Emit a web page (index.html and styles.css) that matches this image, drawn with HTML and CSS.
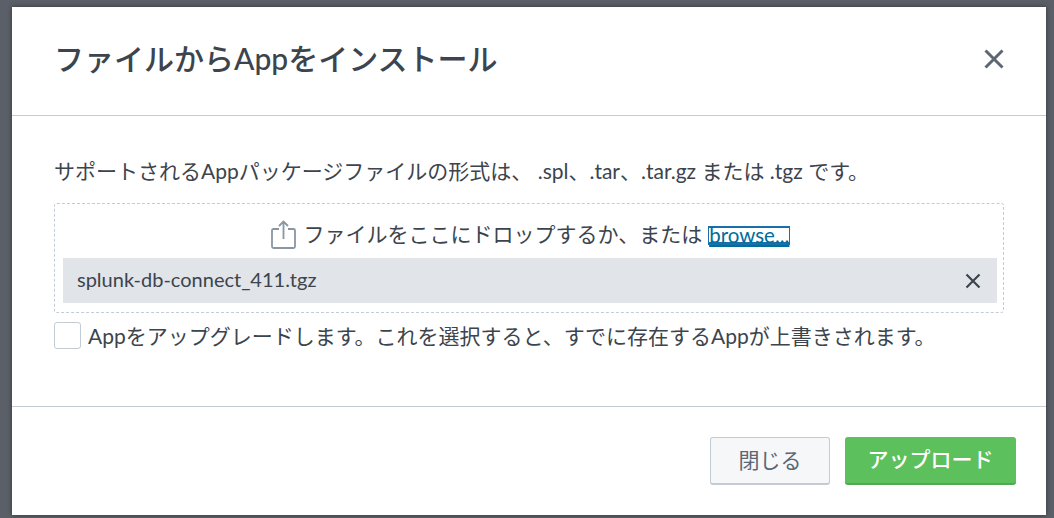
FILE: index.html
```html
<!DOCTYPE html>
<html lang="ja">
<head>
<meta charset="utf-8">
<title>ファイルからAppをインストール</title>
<link rel="stylesheet" href="styles.css">
</head>
<body>
<div class="modal">
  <header class="modal-head">
    <h1 class="title">ファイルからAppをインストール</h1>
    <svg class="close" viewBox="0 0 20 20" width="20" height="20"><path d="M1.5 1.5L18.5 18.5M18.5 1.5L1.5 18.5"/></svg>
  </header>
  <main class="modal-body">
    <p class="formats">サポートされるAppパッケージファイルの形式は、 .spl、.tar、.tar.gz または .tgz です。</p>
    <div class="dropzone">
      <div class="drop-line">
        <svg class="upload" viewBox="0 0 25 29" width="25" height="29"><path d="M8 9H2.5Q1 9 1 10.5V26.5Q1 28 2.5 28H22.5Q24 28 24 26.5V10.5Q24 9 22.5 9H17M12.5 19V1.5M8 6L12.5 1.5L17 6"/></svg>
        <span class="drop-text">ファイルをここにドロップするか、または</span>
        <a class="browse" href="#">browse...</a>
      </div>
      <div class="file-row">
        <span class="file-name">splunk-db-connect_411.tgz</span>
        <svg class="remove" viewBox="0 0 16 16" width="16" height="16"><path d="M1.5 1.5L14.5 14.5M14.5 1.5L1.5 14.5"/></svg>
      </div>
    </div>
    <label class="upgrade">
      <span class="checkbox"></span>
      <span>Appをアップグレードします。これを選択すると、すでに存在するAppが上書きされます。</span>
    </label>
  </main>
  <footer class="modal-foot">
    <button class="btn btn-close" type="button">閉じる</button>
    <button class="btn btn-upload" type="button">アップロード</button>
  </footer>
</div>
</body>
</html>
```
FILE: styles.css
```css
* { box-sizing: border-box; }
html, body { height: 100%; }
body {
  margin: 0;
  padding: 7px 8px 3px 12px;
  background: #5b6068;
  font-family: "Lato", "Noto Sans CJK JP", sans-serif;
  color: #3c444d;
  overflow: hidden;
}
.modal {
  height: 508px;
  background: #fff;
  display: flex;
  flex-direction: column;
  box-shadow: 0 0 5px rgba(0, 0, 0, 0.45);
}
.modal-head {
  height: 109px;
  flex: none;
  border-bottom: 1px solid #c3cbd4;
  display: flex;
  align-items: center;
  justify-content: space-between;
  padding: 0 42px 0 42px;
}
.title {
  margin: 0;
  font-size: 30px;
  font-weight: 500;
  line-height: 36px;
  position: relative;
  top: -3px;
}
.close { fill: none; stroke: #5c6773; stroke-width: 3; position: relative; top: -2px; }
.modal-body { flex: 1; padding: 43px 42px 0 42px; border-bottom: 1px solid #c3cbd4; }
.formats { margin: 0 0 20px; font-size: 21px; line-height: 24px; }
.dropzone {
  border: 1px dashed #c3cbd4;
  border-radius: 3px;
  padding: 0 6px 9px 8px;
  height: 110px;
}
.drop-line {
  height: 54px;
  display: flex;
  align-items: center;
  justify-content: center;
  gap: 8px;
  font-size: 21px;
  padding: 4px 0 0 1px;
}
.upload { fill: none; stroke: #8b96a1; stroke-width: 1.8; position: relative; top: 1px; }
.drop-text { margin-right: -2px; }
.browse {
  color: #006d9c;
  font-size: 20.5px;
  text-decoration: underline;
  border: 1px solid #1a6fa8;
  border-top-width: 2px;
  border-bottom-width: 3px;
  height: 19px;
  line-height: 14px;
  position: relative;
  top: 2px;
}
.file-row {
  height: 45px;
  background: #e1e5e9;
  display: flex;
  align-items: center;
  justify-content: space-between;
  padding: 0 16px 0 14px;
  font-size: 20px;
}
.file-name { position: relative; top: -2px; }
.remove { fill: none; stroke: #3c444d; stroke-width: 2.2; }
.upgrade { display: flex; align-items: center; gap: 7px; margin-top: 8px; font-size: 21px; height: 28px; }
.checkbox { width: 27px; height: 27px; border: 1px solid #c3cbd4; border-radius: 3px; background: #fff; flex: none; }
.modal-foot { height: 108px; flex: none; display: flex; justify-content: flex-end; gap: 15px; padding: 30px 30px 0 0; }
.btn { height: 48px; border-radius: 3px; font: inherit; font-size: 21px; padding: 0 0 4px; }
.btn-close { width: 120px; background: #f5f7f9; border: 1px solid #c3cbd4; border-bottom-width: 2px; color: #5c6773; }
.btn-upload { width: 171px; background: #5cc05c; border: 0; border-bottom: 2px solid #53a653; color: #fff; font-weight: 500; }
```
